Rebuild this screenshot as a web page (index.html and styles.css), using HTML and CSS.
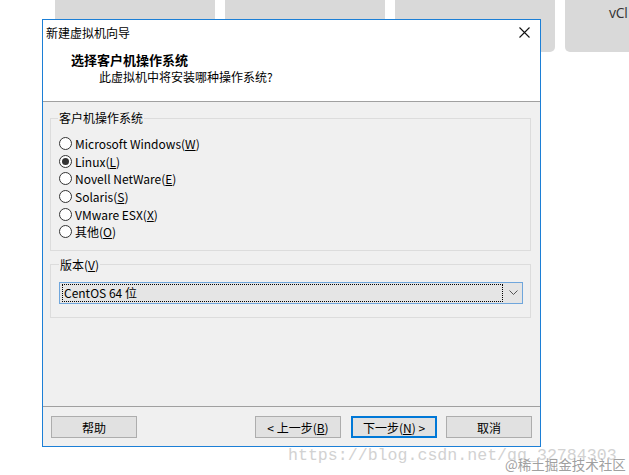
FILE: index.html
```html
<!DOCTYPE html>
<html lang="zh-CN">
<head>
    <meta charset="UTF-8">
    <meta name="viewport" content="width=device-width, initial-scale=1.0">
    <title>新建虚拟机向导</title>
    <link rel="stylesheet" href="styles.css">
</head>
<body>
    <div class="tiles">
        <div class="tile"></div>
        <div class="tile"></div>
        <div class="tile"></div>
        <div class="tile tile-text">vCl</div>
    </div>

    <div class="dialog">
        <div class="titlebar">
            <span>新建虚拟机向导</span>
            <svg class="close" width="11" height="11" viewBox="0 0 11 11">
                <path d="M0.5 0.5 L10.5 10.5 M10.5 0.5 L0.5 10.5" stroke="#111" stroke-width="1.1" fill="none"/>
            </svg>
        </div>

        <div class="header">
            <div class="header-title">选择客户机操作系统</div>
            <div class="header-sub">此虚拟机中将安装哪种操作系统?</div>
        </div>

        <div class="body">
            <fieldset class="group">
                <legend>客户机操作系统</legend>
                <div class="radio-list">
                    <div class="radio"><span class="dot"></span>Microsoft Windows(<u>W</u>)</div>
                    <div class="radio"><span class="dot checked"></span>Linux(<u>L</u>)</div>
                    <div class="radio"><span class="dot"></span>Novell NetWare(<u>E</u>)</div>
                    <div class="radio"><span class="dot"></span>Solaris(<u>S</u>)</div>
                    <div class="radio"><span class="dot"></span>VMware ESX(<u>X</u>)</div>
                    <div class="radio"><span class="dot"></span>其他(<u>O</u>)</div>
                </div>
            </fieldset>

            <fieldset class="group group-version">
                <legend>版本(<u>V</u>)</legend>
                <div class="combo">
                    <span class="combo-value">CentOS 64 位</span>
                    <svg class="chevron" width="9" height="5" viewBox="0 0 9 5">
                        <path d="M0.5 0.5 L4.5 4.5 L8.5 0.5" stroke="#555" stroke-width="1" fill="none"/>
                    </svg>
                </div>
            </fieldset>
        </div>

        <div class="footer">
            <button class="btn">帮助</button>
            <div class="nav-buttons">
                <button class="btn">&lt; 上一步(<u>B</u>)</button>
                <button class="btn btn-default">下一步(<u>N</u>) &gt;</button>
                <button class="btn btn-cancel">取消</button>
            </div>
        </div>
    </div>

    <div class="watermark">https://blog.csdn.net/qq_32784303</div>
    <div class="badge">@稀土掘金技术社区</div>
</body>
</html>
```

FILE: styles.css
```css
body {
    margin: 0;
    width: 629px;
    height: 475px;
    overflow: hidden;
    position: relative;
    background-color: #fff;
    font-family: "Noto Sans CJK SC", sans-serif;
    font-size: 12px;
    color: #000;
}

.tiles {
    display: flex;
    gap: 10px;
    padding-left: 55px;
}

.tile {
    flex: 0 0 160px;
    height: 52px;
    background-color: #d9d9d9;
    border-radius: 0 0 5px 5px;
}

.tile-text {
    flex-basis: 64px;
    padding: 3px 0 0 44px;
    box-sizing: border-box;
    border-radius: 0 0 0 5px;
    font-family: "Open Sans", sans-serif;
    font-size: 14px;
    letter-spacing: -0.3px;
    color: #333;
}

.dialog {
    position: absolute;
    left: 42px;
    top: 19px;
    width: 497px;
    height: 426px;
    border: 1px solid #1c7fd6;
    background-color: #f0f0f0;
    display: flex;
    flex-direction: column;
}

.titlebar {
    height: 25px;
    background-color: #fff;
    display: flex;
    align-items: center;
    justify-content: space-between;
    padding: 0 10px 0 3px;
}

.header {
    background-color: #fff;
    border-bottom: 1px solid #a0a0a0;
    box-sizing: border-box;
    height: 57px;
    padding: 6px 0 0 28px;
    line-height: 17px;
}

.header-title {
    font-weight: bold;
    font-size: 13px;
}

.header-sub {
    padding-left: 28px;
}

.body {
    flex: 1;
    padding: 8px 9px 0 7px;
    border-bottom: 1px solid #a0a0a0;
}

.group {
    margin: 0;
    padding: 0 7px 9px 7px;
    border: 1px solid #dcdcdc;
}

.group legend {
    padding: 0 1px;
    line-height: 16px;
}

.radio-list {
    padding: 9px 0 0 1px;
}

.radio {
    height: 17.6px;
    display: flex;
    align-items: center;
}

.dot {
    width: 11px;
    height: 11px;
    border: 1px solid #333;
    border-radius: 50%;
    background-color: #fff;
    margin-right: 3px;
    display: flex;
    align-items: center;
    justify-content: center;
}

.dot.checked::after {
    content: "";
    width: 7px;
    height: 7px;
    border-radius: 50%;
    background-color: #333;
}

.group-version {
    margin-top: 6px;
    padding: 0 7px 13px 8px;
}

.combo {
    margin-top: 9px;
    height: 22px;
    border: 1px solid #6fa6dc;
    background-color: #e5e5e5;
    box-sizing: border-box;
    display: flex;
    align-items: center;
    padding: 0 4px 0 2px;
}

.combo-value {
    flex: 1;
    height: 16px;
    line-height: 16px;
    border: 1px dotted #000;
    margin-right: 6px;
    padding-left: 1px;
}

.footer {
    height: 39px;
    display: flex;
    align-items: flex-start;
    justify-content: space-between;
    padding: 9px 8px 0 8px;
    box-sizing: border-box;
}

.nav-buttons {
    display: flex;
    gap: 9px;
}

.btn {
    width: 86px;
    height: 22px;
    padding: 0;
    border: 1px solid #adadad;
    background-color: #e1e1e1;
    font-family: inherit;
    font-size: 12px;
    color: #000;
}

.btn-default {
    border: 2px solid #0078d7;
    margin-left: 1px;
}

.watermark {
    position: absolute;
    left: 288px;
    top: 446px;
    font-family: "Liberation Mono", monospace;
    font-size: 16.6px;
    color: #d2d2d2;
}

.badge {
    position: absolute;
    left: 505px;
    top: 454px;
    font-size: 13.5px;
    color: #a0a0a0;
    text-shadow: 0 0 2px #fff;
}
```
